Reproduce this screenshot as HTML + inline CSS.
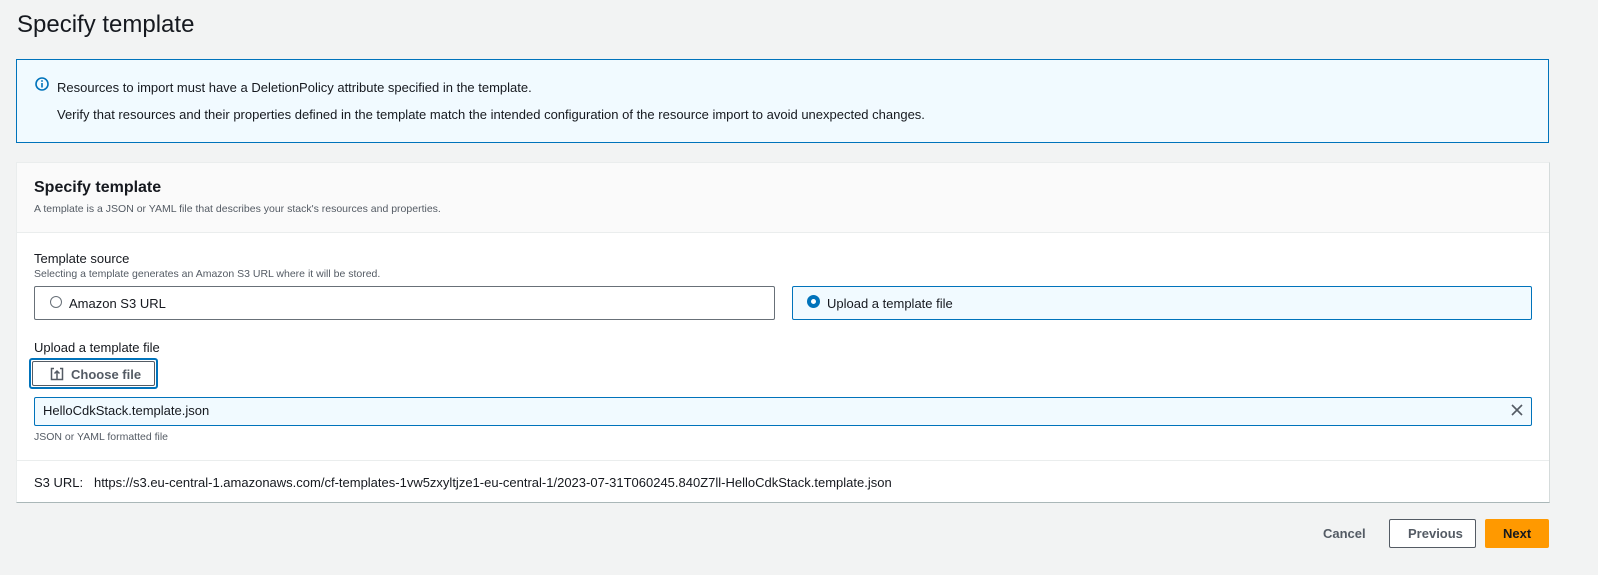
<!DOCTYPE html>
<html><head><meta charset="utf-8"><style>
*{box-sizing:border-box;margin:0;padding:0}
body{width:1598px;height:575px;background:#f2f3f3;font-family:"Liberation Sans",sans-serif;color:#16191f;position:relative;overflow:hidden}
.a{position:absolute;white-space:nowrap}
.s14{font-size:13px}
.s12{font-size:11px;color:#545b64}
</style></head><body>
<div class="a" style="left:17px;top:11px;font-size:24px">Specify template</div>
<div class="a" style="left:16px;top:59px;width:1533px;height:84px;background:#f1faff;border:1px solid #0073bb"></div>
<svg class="a" style="left:35px;top:77px" width="14" height="14" viewBox="0 0 14 14"><circle cx="7" cy="7" r="6" fill="none" stroke="#0073bb" stroke-width="1.6"/><rect x="6.2" y="6" width="1.6" height="4.5" fill="#0073bb"/><rect x="6.2" y="3.2" width="1.6" height="1.6" fill="#0073bb"/></svg>
<div class="a s14" style="left:57px;top:80px">Resources to import must have a DeletionPolicy attribute specified in the template.</div>
<div class="a s14" style="left:57px;top:107px">Verify that resources and their properties defined in the template match the intended configuration of the resource import to avoid unexpected changes.</div>

<div class="a" style="left:16px;top:162px;width:1534px;height:341px;background:#fff;border:1px solid #eaeded;border-bottom-color:#aab7b8;border-right-color:#d5dbdb"></div>
<div class="a" style="left:17px;top:163px;width:1532px;height:70px;background:#fafafa;border-bottom:1px solid #eaeded"></div>
<div class="a" style="left:34px;top:179px;font-size:16px;font-weight:bold">Specify template</div>
<div class="a s12" style="left:34px;top:203px;font-size:10.5px">A template is a JSON or YAML file that describes your stack's resources and properties.</div>

<div class="a s14" style="left:34px;top:251px">Template source</div>
<div class="a s12" style="left:34px;top:268px;font-size:10.5px">Selecting a template generates an Amazon S3 URL where it will be stored.</div>
<div class="a" style="left:34px;top:286px;width:741px;height:34px;border:1px solid #687078;border-radius:2px"></div>
<div class="a" style="left:50px;top:296px;width:12px;height:12px;border:1px solid #687078;border-radius:50%"></div>
<div class="a s14" style="left:69px;top:296px">Amazon S3 URL</div>
<div class="a" style="left:792px;top:286px;width:740px;height:34px;border:1px solid #0073bb;background:#f1faff;border-radius:2px"></div>
<div class="a" style="left:807px;top:295px;width:13px;height:13px;border:4px solid #0073bb;border-radius:50%;background:#fff"></div>
<div class="a s14" style="left:827px;top:296px">Upload a template file</div>

<div class="a s14" style="left:34px;top:340px">Upload a template file</div>
<div class="a" style="left:29px;top:358px;width:129px;height:31px;border:2px solid #0073bb;border-radius:3px"></div>
<div class="a" style="left:32px;top:361px;width:123px;height:25px;border:1px solid #545b64;border-radius:2px;background:#fff"></div>
<svg class="a" style="left:50px;top:367px" width="14" height="14" viewBox="0 0 14 14" fill="none" stroke="#545b64" stroke-width="1.5"><path d="M4 1.5H1.5v11h11v-11H10M7 12V4M4.5 6.5L7 4l2.5 2.5"/></svg>
<div class="a s14" style="left:71px;top:367px;font-weight:bold;color:#545b64">Choose file</div>
<div class="a" style="left:34px;top:397px;width:1498px;height:29px;border:1px solid #0073bb;background:#f1faff;border-radius:2px"></div>
<div class="a s14" style="left:43px;top:403px">HelloCdkStack.template.json</div>
<svg class="a" style="left:1510px;top:403px" width="14" height="14" viewBox="0 0 14 14" stroke="#545b64" stroke-width="1.6"><path d="M2 2L12 12M12 2L2 12"/></svg>
<div class="a s12" style="left:34px;top:431px;font-size:10.5px">JSON or YAML formatted file</div>
<div class="a" style="left:17px;top:460px;width:1532px;height:1px;background:#eaeded"></div>
<div class="a s14" style="left:34px;top:475px">S3 URL:&nbsp;&nbsp; https://s3.eu-central-1.amazonaws.com/cf-templates-1vw5zxyltjze1-eu-central-1/2023-07-31T060245.840Z7ll-HelloCdkStack.template.json</div>

<div class="a s14" style="left:1323px;top:526px;font-weight:bold;color:#545b64">Cancel</div>
<div class="a" style="left:1389px;top:519px;width:87px;height:29px;border:1px solid #545b64;background:#fff;border-radius:2px"></div>
<div class="a s14" style="left:1408px;top:526px;font-weight:bold;color:#545b64">Previous</div>
<div class="a" style="left:1485px;top:519px;width:64px;height:29px;background:#ff9900;border-radius:2px"></div>
<div class="a s14" style="left:1503px;top:526px;font-weight:bold">Next</div>
</body></html>
